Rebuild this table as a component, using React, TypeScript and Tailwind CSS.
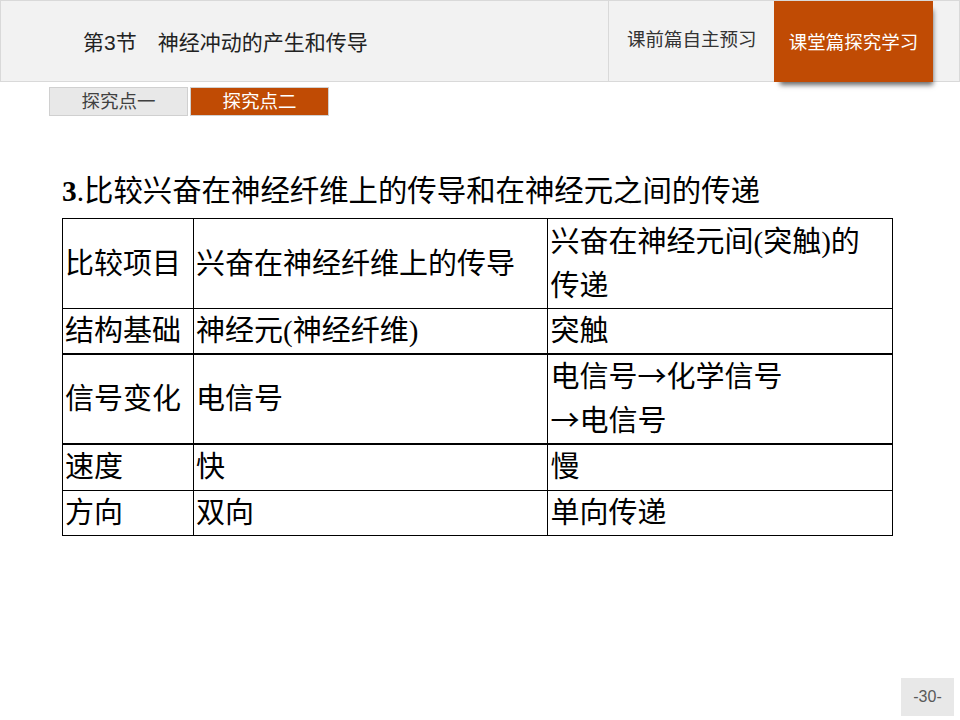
import React from 'react'

const cjk = { fontFamily: '"Liberation Sans", "Noto Sans CJK SC", sans-serif' }
const cell = { fontFamily: '"Liberation Serif", "Noto Sans CJK SC", serif' }

const Arrow = () => (
  <span className="leading-none align-baseline" style={{ fontFamily: '"Noto Sans CJK SC", sans-serif' }}>→</span>
)

const rows = [
  { h: 'h-[45px]', a: '结构基础', b: '神经元(神经纤维)', c: '突触', thick: false },
  { h: 'h-[89px]', a: '信号变化', b: '电信号', c: <>电信号<Arrow />化学信号<br /><Arrow />电信号</>, thick: true },
  { h: 'h-[46px]', a: '速度', b: '快', c: '慢', thick: false },
  { h: 'h-[45px]', a: '方向', b: '双向', c: '单向传递', thick: false },
]

export default function App() {
  return (
    <div className="w-[960px] h-[720px] bg-white flex flex-col overflow-hidden" style={cjk}>
      {/* Header */}
      <div className="h-[82px] flex bg-[#f2f2f2] border border-[#d9d9d9]">
        <div className="flex-1 flex items-center pl-[82px] pt-[3px] text-[21px] text-[#222]">
          <span>第3节</span>
          <span className="ml-[21px]">神经冲动的产生和传导</span>
        </div>
        <div className="w-[166px] border-l border-[#d9d9d9] flex items-center pl-[18px] pb-[2px] text-[18.5px] text-[#333]">
          课前篇自主预习
        </div>
        <div className="w-[159px] -mb-px bg-[#c04b04] flex items-center justify-center pt-[2px] text-[18.5px] text-white shadow-[3px_6px_5px_-3px_rgba(0,0,0,0.6)] z-10">
          课堂篇探究学习
        </div>
        <div className="w-[26px]" />
      </div>

      {/* Sub tabs */}
      <div className="flex gap-[2px] pl-[49px] mt-[5px]">
        <div className="w-[139px] h-[29px] bg-[#e8e8e8] border border-[#d0d0d0] flex items-center justify-center text-[18.5px] text-[#404040]">
          探究点一
        </div>
        <div className="w-[139px] h-[29px] bg-[#c04b04] border border-[#d0d0d0] flex items-center justify-center text-[18.5px] text-white">
          探究点二
        </div>
      </div>

      {/* Heading */}
      <div className="pl-[62px] mt-[55px] text-[29.4px] leading-[40px] text-black" style={cell}>
        <span className="font-bold">3</span>.比较兴奋在神经纤维上的传导和在神经元之间的传递
      </div>

      {/* Table */}
      <table className="ml-[62px] mt-[7px] w-[831px] border-collapse text-[29px] leading-[44px] text-black" style={cell}>
        <colgroup>
          <col className="w-[131px]" />
          <col className="w-[355px]" />
          <col className="w-[345px]" />
        </colgroup>
        <tbody>
          <tr className="h-[90px]">
            <td className="border border-black pl-[2px] align-middle whitespace-nowrap">比较项目</td>
            <td className="border border-black pl-[2px] align-middle">兴奋在神经纤维上的传导</td>
            <td className="border border-black pl-[2px] align-middle">兴奋在神经元间(突触)的<br />传递</td>
          </tr>
          {rows.map((r, i) => (
            <tr key={i} className={r.h}>
              <td className={`border border-black pl-[2px] align-middle whitespace-nowrap ${r.thick ? 'border-y-2' : ''}`}>{r.a}</td>
              <td className={`border border-black pl-[2px] align-middle ${r.thick ? 'border-y-2' : ''}`}>{r.b}</td>
              <td className={`border border-black pl-[2px] align-middle ${r.thick ? 'border-y-2' : ''}`}>{r.c}</td>
            </tr>
          ))}
        </tbody>
      </table>

      {/* Page number */}
      <div className="mt-auto flex justify-end pr-[6px] pb-[4px]">
        <div className="w-[53px] h-[38px] bg-[#e8e8e8] flex items-center justify-center text-[16px] text-[#595959]">
          -30-
        </div>
      </div>
    </div>
  )
}
